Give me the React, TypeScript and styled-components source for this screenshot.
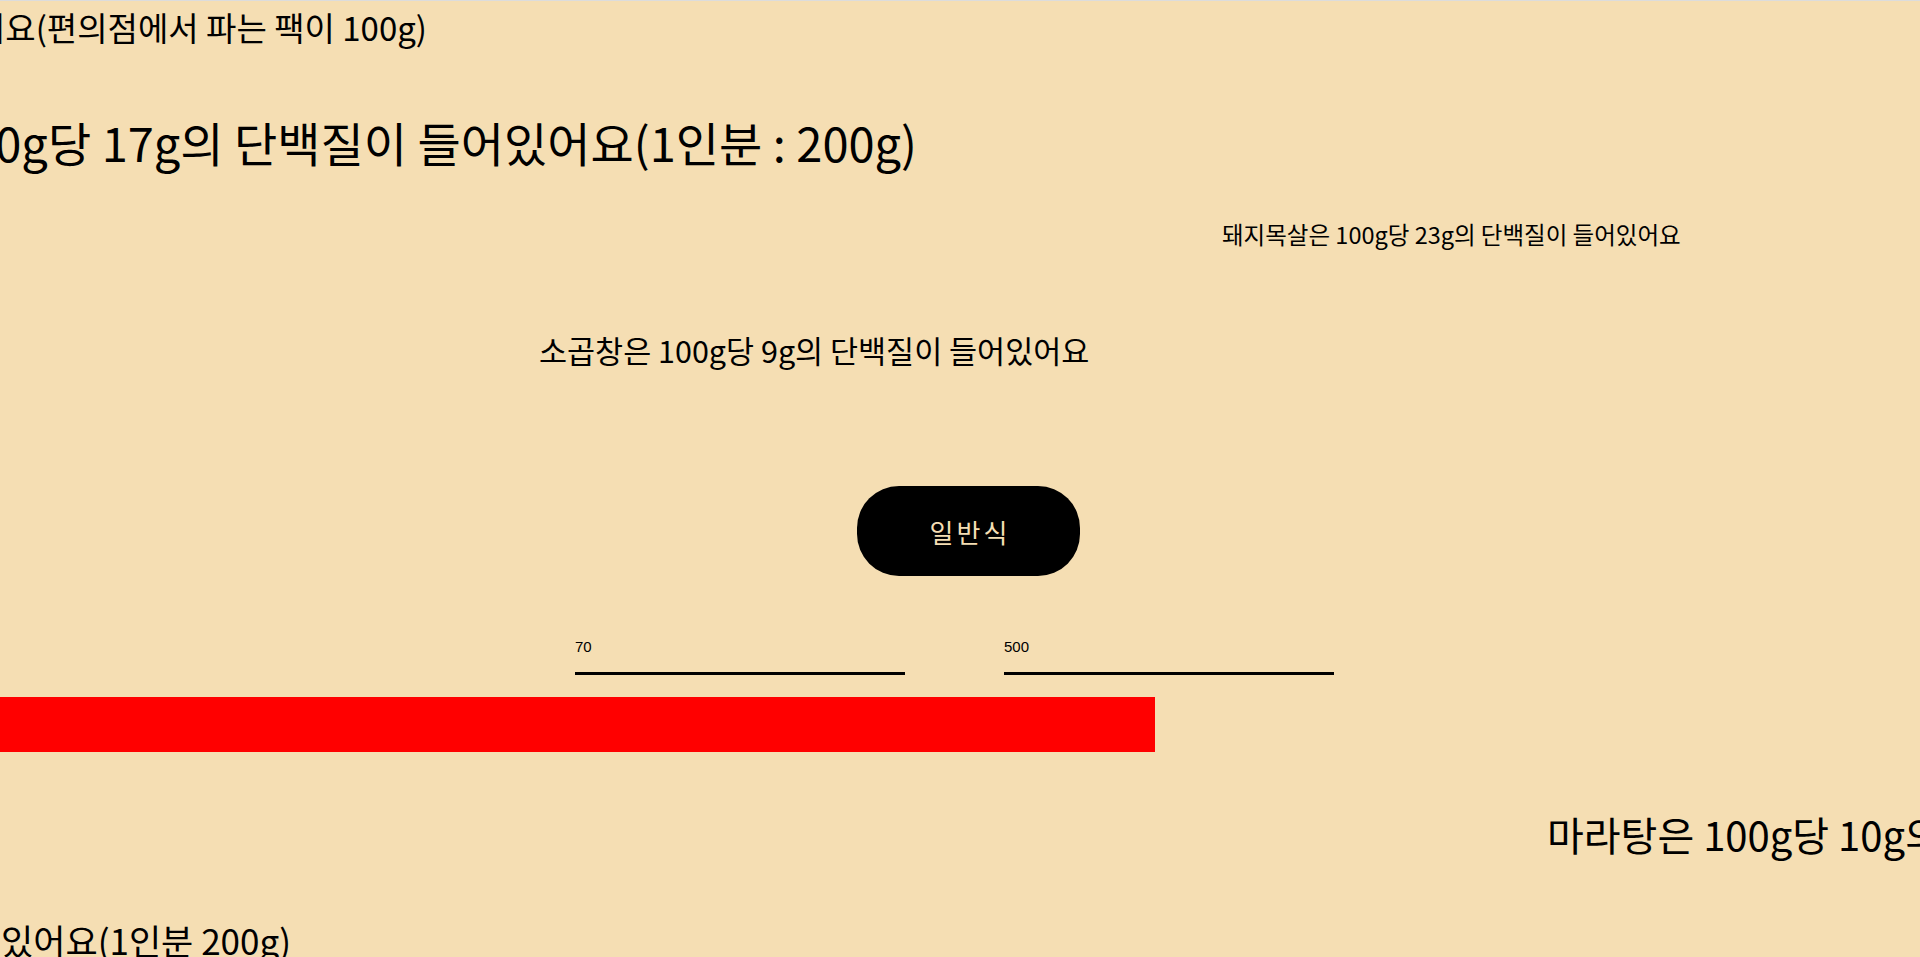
import React, { useState } from "react";
import styled, { createGlobalStyle } from "styled-components";

const GlobalStyle = createGlobalStyle`
  html, body {
    margin: 0;
    padding: 0;
    background: #f5deb3;
    overflow: hidden;
  }
  body {
    font-family: "Noto Sans CJK KR", "Noto Sans", sans-serif;
    color: #000;
  }
  * { box-sizing: border-box; }
`;

const Page = styled.main`
  width: 1920px;
  height: 957px;
  overflow: hidden;
  border-top: 1px solid #dcdcdc;
  background: #f5deb3;
  display: flex;
  flex-direction: column;
`;

const TextRow = styled.div<{
  $height: number;
  $top: number;
  $size: number;
  $start?: number;
  $end?: number;
  $spacing?: number;
}>`
  flex: none;
  display: flex;
  align-items: center;
  height: ${(p) => p.$height}px;
  margin-top: ${(p) => p.$top}px;
  font-size: ${(p) => p.$size}px;
  letter-spacing: ${(p) => p.$spacing ?? 0}px;
  white-space: nowrap;
  line-height: 1;
  ${(p) =>
    p.$end !== undefined
      ? `width: ${p.$end}px; justify-content: flex-end;`
      : `padding-left: ${p.$start ?? 0}px; justify-content: flex-start;`}
`;

const Sentence = styled.p`
  margin: 0;
  flex: none;
`;

const ButtonRow = styled.div`
  flex: none;
  margin-top: 116px;
  padding-left: 857px;
  display: flex;
`;

const DietButton = styled.button`
  width: 223px;
  height: 90px;
  border: none;
  border-radius: 42px;
  background: #000;
  color: #f5deb3;
  font-family: "Noto Sans CJK KR", "Noto Sans", sans-serif;
  font-size: 26px;
  letter-spacing: 3px;
  padding: 0 0 0 3px;
  cursor: pointer;
`;

const InputRow = styled.div`
  flex: none;
  margin-top: 49px;
  padding-left: 575px;
  display: flex;
  gap: 99px;
`;

const NumberField = styled.input`
  width: 330px;
  height: 50px;
  padding: 0 0 5px 0;
  border: none;
  border-bottom: 3px solid #000;
  background: transparent;
  font-family: "Liberation Sans", Arial, sans-serif;
  font-size: 15px;
  color: #000;
  outline: none;
`;

const Bar = styled.div<{ $width: number }>`
  flex: none;
  margin-top: 22px;
  height: 55px;
  width: ${(p) => p.$width}px;
  background: #ff0000;
`;

export default function App() {
  const [weight, setWeight] = useState("70");
  const [target, setTarget] = useState("500");
  const ratio = 0.6016;

  return (
    <>
      <GlobalStyle />
      <Page>
        <TextRow $height={52} $top={0} $size={33} $end={427}>
          <Sentence>
            닭가슴살은 100g당 23g의 단백질이 들어있어요(편의점에서 파는 팩이 100g)
          </Sentence>
        </TextRow>
        <TextRow $height={60} $top={58} $size={47} $end={917}>
          <Sentence>삼겹살은 100g당 17g의 단백질이 들어있어요(1인분 : 200g)</Sentence>
        </TextRow>
        <TextRow $height={30} $top={49} $size={23.5} $start={1222}>
          <Sentence>돼지목살은 100g당 23g의 단백질이 들어있어요</Sentence>
        </TextRow>
        <TextRow $height={40} $top={80} $size={30.5} $start={539}>
          <Sentence>소곱창은 100g당 9g의 단백질이 들어있어요</Sentence>
        </TextRow>
        <ButtonRow>
          <DietButton type="button">일반식</DietButton>
        </ButtonRow>
        <InputRow>
          <NumberField
            type="text"
            value={weight}
            onChange={(e) => setWeight(e.target.value)}
          />
          <NumberField
            type="text"
            value={target}
            onChange={(e) => setTarget(e.target.value)}
          />
        </InputRow>
        <Bar $width={Math.round(1920 * ratio)} />
        <TextRow $height={50} $top={57} $size={40} $start={1547}>
          <Sentence>마라탕은 100g당 10g의 단백질이 들어있어요(1인분 200g)</Sentence>
        </TextRow>
        <TextRow $height={40} $top={60} $size={35} $end={291}>
          <Sentence>오리고기는 100g당 18g의 단백질이 들어있어요(1인분 200g)</Sentence>
        </TextRow>
      </Page>
    </>
  );
}
